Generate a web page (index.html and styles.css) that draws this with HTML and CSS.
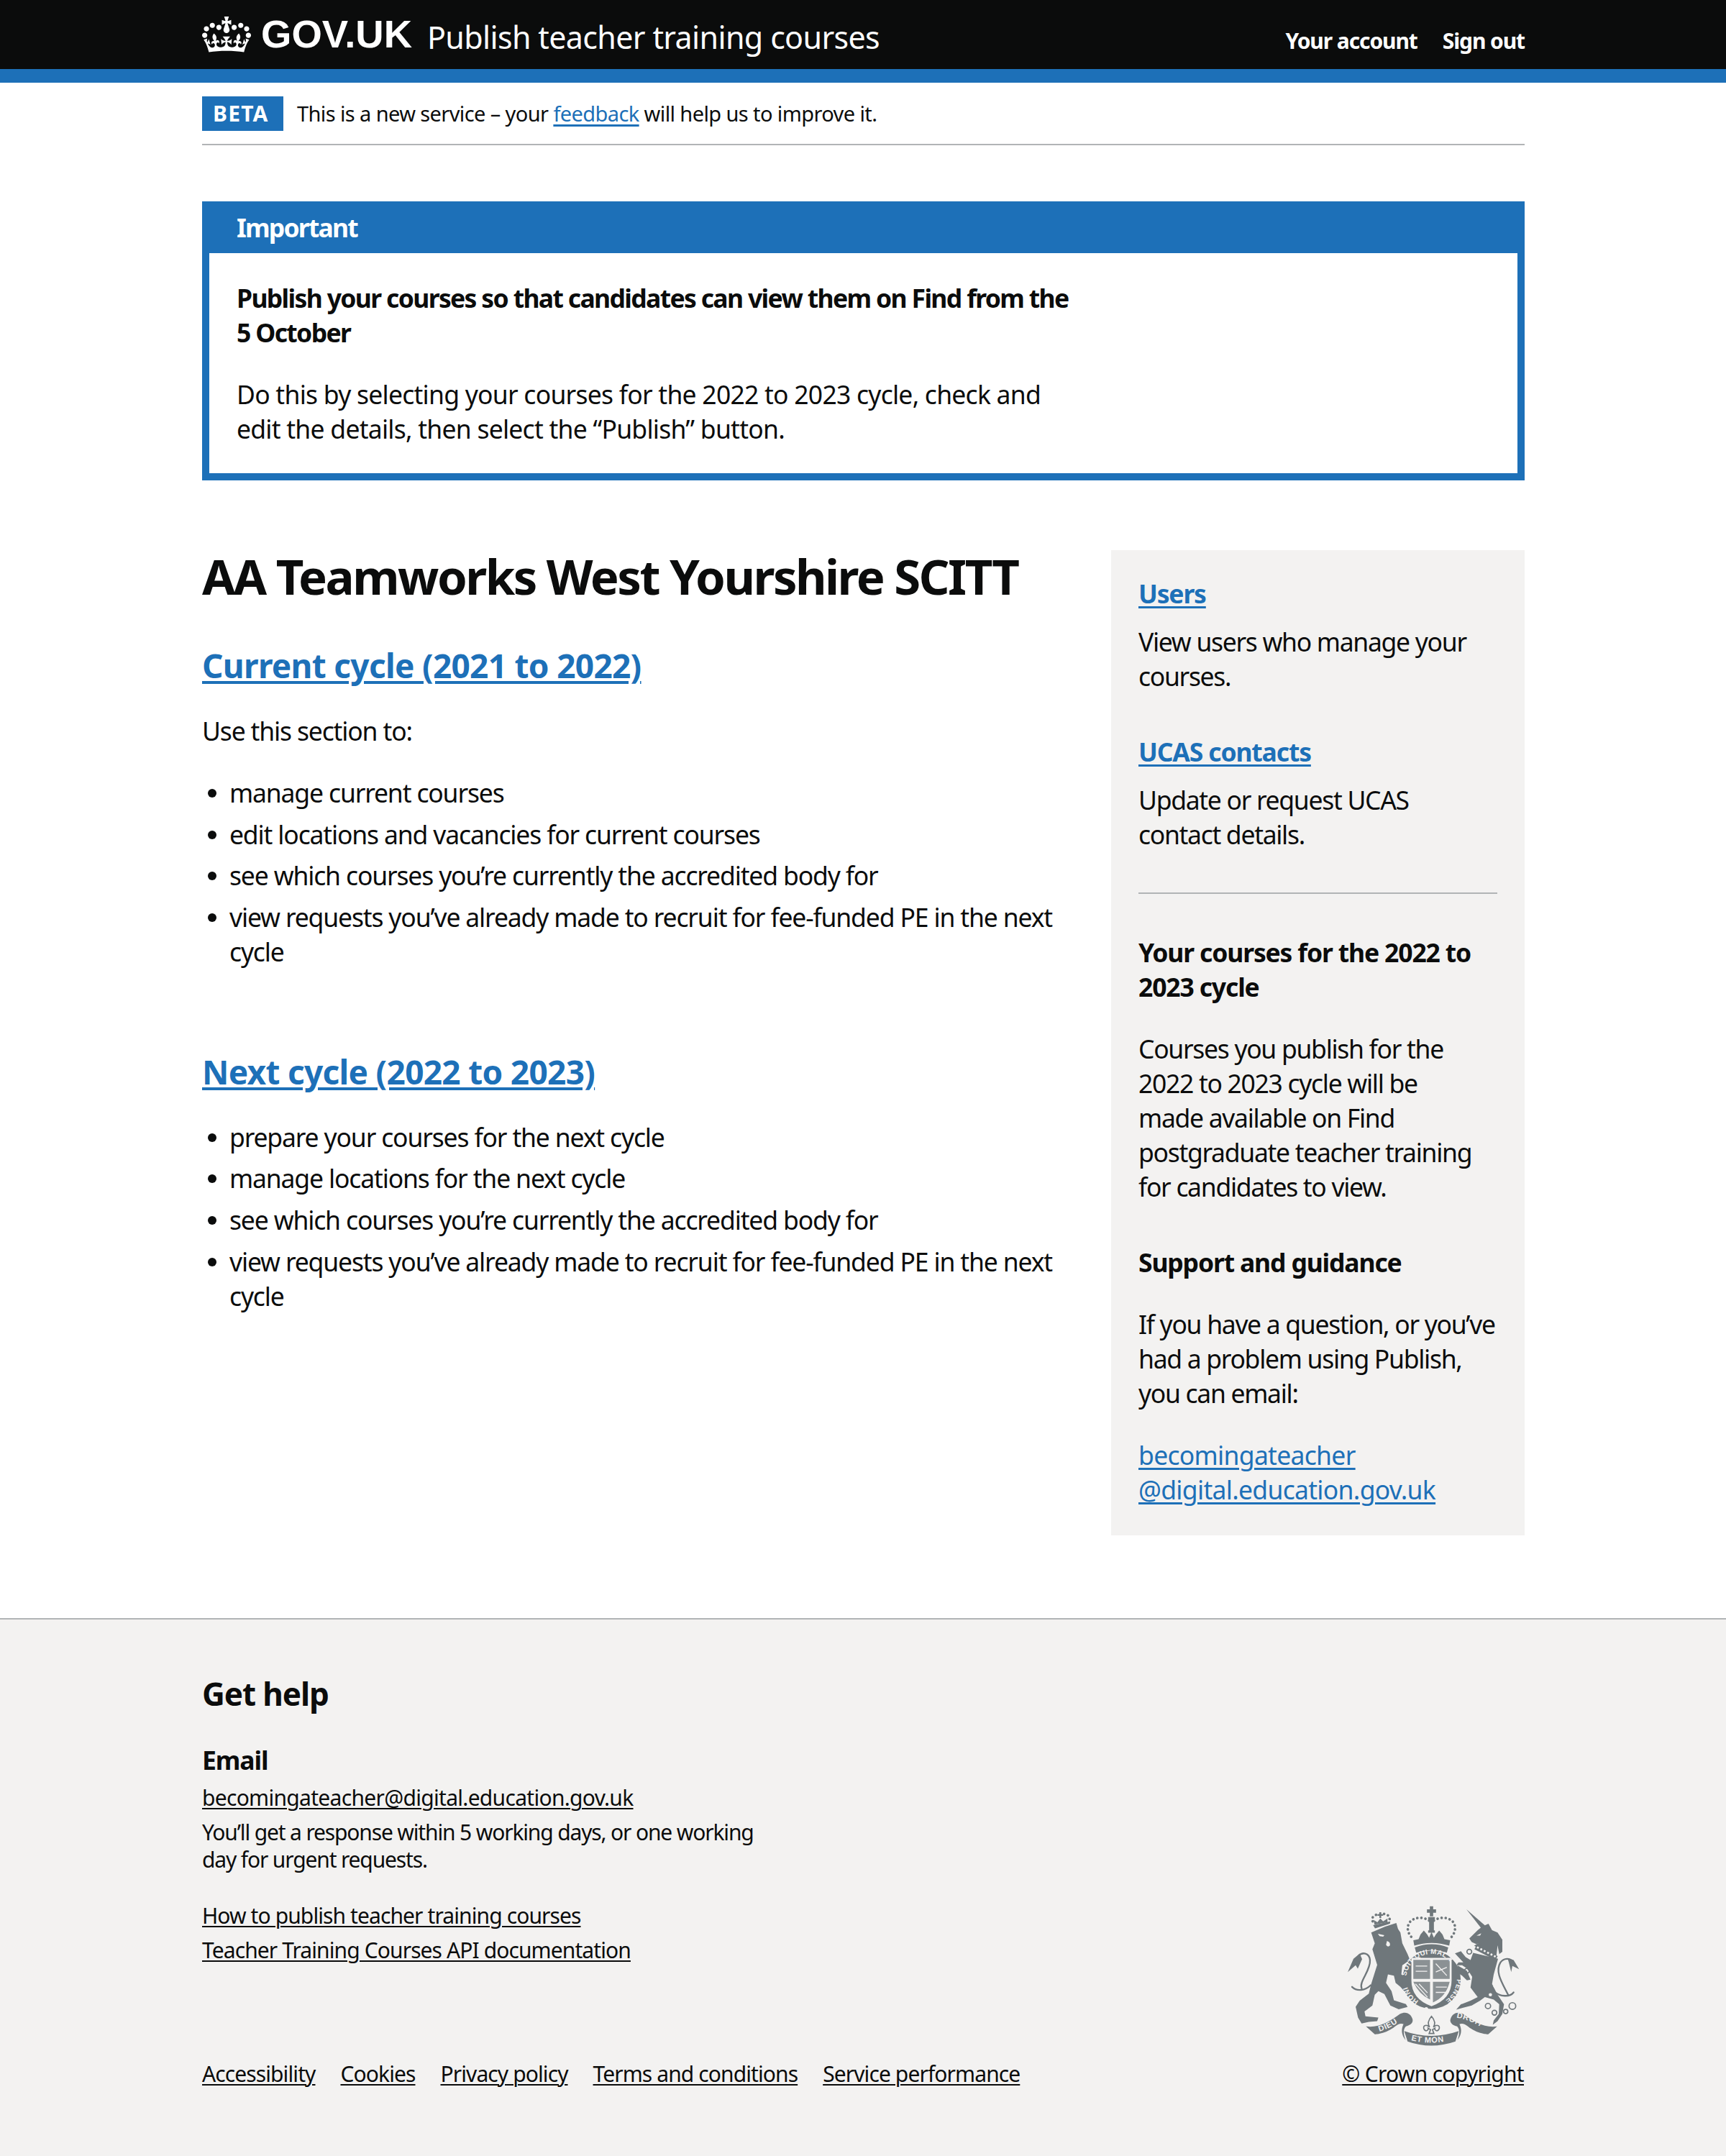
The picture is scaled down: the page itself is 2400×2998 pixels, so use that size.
FILE: index.html
```html
<!DOCTYPE html>
<html lang="en">
<head>
<meta charset="utf-8">
<title>Publish teacher training courses</title>
<link rel="stylesheet" href="styles.css">
</head>
<body>
<header class="site-header">
  <div class="wrap header-row">
    <a class="logo" href="#">
      <svg class="crown" viewBox="0 0 132 97" aria-hidden="true"><path fill="currentColor" fill-rule="evenodd" d="M25 30.2c3.5 1.5 7.7-.2 9.1-3.7 1.5-3.6-.2-7.8-3.9-9.2-3.6-1.4-7.6.3-9.1 3.9-1.4 3.5.3 7.5 3.9 9zM9 39.5c3.6 1.5 7.8-.2 9.2-3.7 1.5-3.6-.2-7.8-3.9-9.1-3.6-1.5-7.6.2-9.1 3.8-1.4 3.5.3 7.5 3.8 9zM4.4 57.2c3.5 1.5 7.7-.2 9.1-3.8 1.5-3.6-.2-7.7-3.9-9.1-3.5-1.5-7.6.3-9.1 3.8-1.4 3.5.3 7.6 3.9 9.1zm38.3-21.4c3.5 1.5 7.7-.2 9.1-3.8 1.5-3.6-.2-7.7-3.9-9.1-3.6-1.5-7.6.3-9.1 3.8-1.3 3.6.4 7.7 3.9 9.1zm64.4-5.6c-3.6 1.5-7.8-.2-9.1-3.7-1.5-3.6.2-7.8 3.8-9.2 3.6-1.4 7.7.3 9.2 3.9 1.3 3.5-.4 7.5-3.9 9zm15.9 9.3c-3.6 1.5-7.7-.2-9.1-3.7-1.5-3.6.2-7.8 3.7-9.1 3.6-1.5 7.7.2 9.2 3.8 1.5 3.5-.3 7.5-3.8 9zm4.7 17.7c-3.6 1.5-7.8-.2-9.2-3.8-1.5-3.6.2-7.7 3.9-9.1 3.6-1.5 7.7.3 9.2 3.8 1.3 3.5-.4 7.6-3.9 9.1zM89.3 35.8c-3.6 1.5-7.8-.2-9.2-3.8-1.4-3.6.2-7.7 3.9-9.1 3.6-1.5 7.7.3 9.2 3.8 1.4 3.6-.3 7.7-3.9 9.1zM69.7 17.7l8.9 4.7V9.3l-8.9 2.8c-.2-.3-.5-.6-.9-.9L72.4 0H59.6l3.5 11.2c-.3.3-.6.5-.9.9l-8.8-2.8v13.1l8.8-4.7c.3.3.6.7.9.9l-5 15.4v.1c-.2.8-.4 1.6-.4 2.4 0 4.1 3.1 7.5 7 8.1h.2c.3 0 .7.1 1 .1.4 0 .7 0 1-.1h.2c4-.6 7.1-4.1 7.1-8.1 0-.8-.1-1.7-.4-2.4V34l-5.1-15.4c.4-.2.7-.6 1-.9zM66 92.8c16.9 0 32.8 1.1 47.1 3.2 4-16.9 8.9-26.7 14-33.5l-9.6-3.4c1 4.9 1.1 7.2 0 10.2-1.5-1.4-3-4.3-4.2-8.7L108.6 76c2.8-2 5-3.2 7.5-3.3-4.4 9.4-10 11.9-13.6 11.2-4.3-.8-6.3-4.6-5.6-7.9 1-4.7 5.7-5.9 8-.5 4.3-8.7-3-11.4-7.6-8.8 7.1-7.2 7.9-13.5 2.1-21.1-8 6.1-8.1 12.3-4.5 20.8-4.7-5.4-12.1-2.5-9.5 6.2 3.4-5.2 7.9-2 7.2 3.1-.6 4.3-6.4 7.8-13.5 7.2-10.3-.9-10.9-8-11.2-13.8 2.5-.5 7.1 1.8 11 7.3L80.2 60c-4.1 4.4-8 5.3-12.3 5.4 1.4-4.4 8-11.6 8-11.6H55.5s6.4 7.2 7.9 11.6c-4.2-.1-8-1-12.3-5.4l1.4 16.4c3.9-5.5 8.5-7.7 10.9-7.3-.3 5.8-.9 12.8-11.1 13.8-7.2.6-12.9-2.9-13.5-7.2-.7-5 3.8-8.3 7.1-3.1 2.7-8.7-4.6-11.6-9.4-6.2 3.7-8.5 3.6-14.7-4.6-20.8-5.8 7.6-5 13.9 2.2 21.1-4.7-2.6-11.9.1-7.7 8.8 2.3-5.5 7.1-4.2 8.1.5.7 3.3-1.3 7.1-5.7 7.9-3.5.7-9-1.8-13.5-11.2 2.5.1 4.7 1.3 7.5 3.3l-4.7-15.4c-1.2 4.4-2.7 7.2-4.3 8.7-1.1-3-.9-5.3 0-10.2l-9.5 3.4c5 6.9 9.9 16.7 14 33.5 14.8-2.1 30.8-3.2 47.7-3.2z"/></svg>
      <span class="logo-text">GOV.UK</span>
    </a>
    <a class="service-name" href="#">Publish teacher training courses</a>
    <nav class="account-nav">
      <a href="#">Your account</a>
      <a href="#">Sign out</a>
    </nav>
  </div>
</header>
<div class="wrap">
  <div class="phase">
    <strong class="tag">BETA</strong>
    <span>This is a new service – your <a class="link" href="#">feedback</a> will help us to improve it.</span>
  </div>
  <section class="banner">
    <h2 class="banner-title">Important</h2>
    <div class="banner-body">
      <p class="banner-heading">Publish your courses so that candidates can view them on Find from the 5&nbsp;October</p>
      <p class="banner-text">Do this by selecting your courses for the 2022 to 2023 cycle, check and edit the details, then select the “Publish” button.</p>
    </div>
  </section>
  <main class="columns">
    <div class="main-col">
      <h1 class="page-title">AA Teamworks West Yourshire SCITT</h1>
      <h2 class="section-title"><a class="link" href="#">Current cycle (2021 to 2022)</a></h2>
      <p class="intro">Use this section to:</p>
      <ul class="bullets">
        <li>manage current courses</li>
        <li>edit locations and vacancies for current courses</li>
        <li>see which courses you’re currently the accredited body for</li>
        <li>view requests you’ve already made to recruit for fee-funded PE in the next cycle</li>
      </ul>
      <h2 class="section-title second"><a class="link" href="#">Next cycle (2022 to 2023)</a></h2>
      <ul class="bullets">
        <li>prepare your courses for the next cycle</li>
        <li>manage locations for the next cycle</li>
        <li>see which courses you’re currently the accredited body for</li>
        <li>view requests you’ve already made to recruit for fee-funded PE in the next cycle</li>
      </ul>
    </div>
    <aside class="sidebar">
      <h3 class="side-head"><a class="link" href="#">Users</a></h3>
      <p class="side-link-text">View users who manage your courses.</p>
      <h3 class="side-head"><a class="link" href="#">UCAS contacts</a></h3>
      <p class="side-link-text">Update or request UCAS<br>contact details.</p>
      <hr class="side-rule">
      <h3 class="side-head tight">Your courses for the 2022 to 2023 cycle</h3>
      <p class="side-para">Courses you publish for the 2022 to 2023 cycle will be<br>made available on Find postgraduate teacher training for candidates to view.</p>
      <h3 class="side-head tight">Support and guidance</h3>
      <p class="side-para">If you have a question, or you’ve had a problem using Publish, you can email:</p>
      <p class="side-email"><a class="link" href="#">becomingateacher<br>@digital.education.gov.uk</a></p>
    </aside>
  </main>
</div>
<footer class="site-footer">
  <div class="wrap footer-row">
    <div class="footer-left">
      <h2 class="footer-title">Get help</h2>
      <h3 class="footer-sub">Email</h3>
      <p class="footer-line footer-email"><a class="foot-link" href="#">becomingateacher@digital.education.gov.uk</a></p>
      <p class="footer-note">You’ll get a response within 5 working days, or one working day for urgent requests.</p>
      <p class="footer-line"><a class="foot-link" href="#">How to publish teacher training courses</a></p>
      <p class="footer-line"><a class="foot-link" href="#">Teacher Training Courses API documentation</a></p>
      <ul class="footer-meta">
        <li><a class="foot-link" href="#">Accessibility</a></li>
        <li><a class="foot-link" href="#">Cookies</a></li>
        <li><a class="foot-link" href="#">Privacy policy</a></li>
        <li><a class="foot-link" href="#">Terms and conditions</a></li>
        <li><a class="foot-link" href="#">Service performance</a></li>
      </ul>
    </div>
    <div class="crown-copy">
      <svg class="arms" viewBox="100 85 725 595" aria-hidden="true">
        <defs>
          <path id="g-top" d="M346 395A106 106 0 0 1 558 395"/>
          <path id="g-right" d="M558 392A106 106 0 0 1 504 487"/>
          <path id="g-left" d="M398 486A106 106 0 0 1 346 400"/>
          <path id="r-left" d="M232 614Q285 600 332 560"/>
          <path id="r-mid" d="M366 650Q452 672 538 648"/>
          <path id="r-right" d="M556 556Q620 565 682 610"/>
        </defs>
        <!-- supporters: lion -->
        <g class="af" transform="translate(90 75)">
          <path d="M110 125L168 100 215 85 222 110 232 125 240 170 262 215 272 240 240 262 236 300 262 318 270 342 248 370 232 352 212 335 205 305 180 300 172 335 195 370 205 408 255 424 262 436 225 446 190 430 165 382 140 370 125 385 115 430 82 455 86 475 140 480 135 495 100 498 70 505 55 480 45 435 62 410 100 380 110 340 135 260 115 195 125 170Z"/>
          <path d="M62 213L36 235 12 290 45 262 54 276 72 236Z"/>
          <path d="M118 94L190 78 188 88 126 108Z"/>
          <path d="M144 40h8v8h8v7h-8v9h-8v-9h-8v-7h8z"/>
          <path d="M124 92L120 72 136 82 148 66 160 78 178 66 178 82Z"/>
        </g>
        <g transform="translate(90 75)">
          <path class="as" d="M108 345C85 368 50 372 30 352M70 358C58 330 108 285 105 240 102 208 72 206 58 222"/>
          <path class="ad" d="M116 78C108 60 128 46 148 50 168 42 192 52 186 76"/>
          <path class="ab" d="M138 130L165 136 160 142 145 140ZM176 160Q192 165 188 180 178 188 172 176Z"/>
        </g>
        <!-- supporters: unicorn -->
        <g class="af" transform="translate(450 75)">
          <path d="M148 28L225 95 240 88 255 115 278 125 298 155 298 205 285 215 278 178 272 235 180 180 236 150 215 162 190 174 170 165 160 150 195 115 208 105Z"/>
          <path d="M176 210L280 235 262 300 255 340 278 385 305 425 298 465 278 495 258 510 262 492 283 465 285 425 262 405 225 395 205 410 170 430 132 440 105 447 125 425 165 410 195 395 165 355 172 310 150 275 130 262 105 262 115 250 135 250 100 212 125 203 145 228 165 240Z"/>
          <path d="M110 262L150 285 165 322 150 325 130 305 108 290Z"/>
          <path d="M320 232L345 240 368 278 340 265 335 290 325 250Z"/>
        </g>
        <g transform="translate(450 75)">
          <path class="as" d="M262 370C290 395 330 395 345 375M322 385C300 340 265 290 290 250 305 230 330 232 340 245"/>
          <path class="abs" d="M186 186L274 232"/>
          <path class="ad2" d="M192 186L270 226"/>
          <circle class="ab" cx="268" cy="350" r="7"/><circle class="ab" cx="248" cy="385" r="7"/>
          <path class="ab" d="M190 138L210 128 205 138Z"/>
          <circle class="ar" cx="160" cy="205" r="10"/><circle class="ar" cx="150" cy="285" r="10"/>
          <circle class="ar" cx="238" cy="432" r="11"/><circle class="ar" cx="265" cy="460" r="10"/><circle class="ar" cx="312" cy="455" r="9"/><circle class="ar" cx="340" cy="432" r="14"/>
        </g>
        <!-- main crown -->
        <g class="af">
          <path d="M445 90h14v13h12v14h-12v15h-14v-15h-12v-14h12z"/>
          <path d="M438 135h28v10h-4v46h4v10h-28v-10h4v-46h-4z"/>
          <path d="M376 232L398 228 406 208 420 192 434 208 442 222 452 198 462 222 470 208 484 192 498 208 506 228 530 232 526 255Q452 232 380 255Z"/>
          <path d="M382 262Q452 236 522 262L516 284Q452 262 388 284Z"/>
        </g>
        <path class="ad" d="M442 150C415 132 378 135 360 158 345 182 355 210 378 228M462 150C490 132 526 135 544 158 558 182 548 210 526 228"/>
        <!-- garter -->
        <circle class="af" cx="452" cy="397" r="122"/>
        <path class="ab" d="M368 306H536V400Q536 478 452 508 368 478 368 400Z"/>
        <path class="al" d="M376 314H446V394H376ZM458 314H528V394H458ZM376 406H446V480Q400 460 376 406ZM458 406H528Q512 470 458 492Z"/>
        <path class="ast" d="M386 340H434M386 362H434M470 330L516 380M470 365L516 345M470 428H516M470 450H516M385 415L435 470M400 415L435 452"/>
        <circle class="ab" cx="430" cy="520" r="8"/><circle class="ab" cx="462" cy="530" r="7"/>
        <text class="t-garter"><textPath href="#g-top" startOffset="4%">SOIT QUI MAL Y</textPath></text>
        <text class="t-garter"><textPath href="#g-right" startOffset="2%">PENSE</textPath></text>
        <text class="t-garter"><textPath href="#g-left">HONI</textPath></text>
        <!-- motto ribbon -->
        <g class="af">
          <path d="M178 592C230 600 280 570 320 540 350 525 368 545 372 560 378 575 365 588 345 592 332 605 335 625 344 650 325 625 325 605 335 582 322 578 312 582 300 592 260 625 215 625 215 625Z"/>
          <path transform="translate(904 0) scale(-1 1)" d="M178 592C230 600 280 570 320 540 350 525 368 545 372 560 378 575 365 588 345 592 332 605 335 625 344 650 325 625 325 605 335 582 322 578 312 582 300 592 260 625 215 625 215 625Z"/>
          <path d="M338 612Q450 652 566 612L552 655Q450 690 352 655Z"/>
        </g>
        <path class="afl" d="M452 550C466 566 470 580 460 596 474 580 492 590 482 606 474 616 464 606 466 600L456 606 462 622H442L448 606 438 600C440 606 430 616 422 606 412 590 430 580 444 596 434 580 438 566 452 550Z"/>
        <text class="t-ribbon"><textPath href="#r-left" startOffset="2%">DIEU</textPath></text>
        <text class="t-ribbon"><textPath href="#r-mid">ET MON</textPath></text>
        <text class="t-ribbon"><textPath href="#r-right">DROIT</textPath></text>
      </svg>
      <a class="foot-link crown-link" href="#">© Crown copyright</a>
    </div>
  </div>
</footer>
</body>
</html>
```
FILE: styles.css
```css
* { box-sizing: border-box; }
html, body { margin: 0; padding: 0; }
body {
  font-family: "Noto Sans", "Liberation Sans", sans-serif;
  font-size: 35.5px;
  line-height: 48px;
  letter-spacing: -1.15px;
  color: #0b0c0c;
  background: #fff;
}
.wrap { width: 1839px; margin: 0 280px 0 281px; }
p, h1, h2, h3, ul { margin: 0; padding: 0; }
a { color: inherit; }
.link { color: #1d70b8; text-decoration-thickness: 3px; text-underline-offset: 4px; }

.site-header { background: #0b0c0c; border-bottom: 19px solid #1d70b8; height: 115px; color: #fff; }
.header-row { display: flex; align-items: center; height: 96px; }
.logo { display: flex; align-items: center; color: #fff; text-decoration: none; }
.crown { width: 68px; height: 50px; margin-right: 14px; display: block; }
.logo-text { font-family: "Liberation Sans", sans-serif; font-weight: 700; font-size: 54.5px; letter-spacing: 0; line-height: 60px; }
.service-name { margin-left: 21px; font-size: 43px; color: #fff; text-decoration: none; letter-spacing: -.65px; line-height: 56px; padding-top: 8px; }
.account-nav { margin-left: auto; display: flex; gap: 35px; font-size: 30px; font-weight: 700; letter-spacing: -1.1px; padding-top: 18px; }
.account-nav a { color: #fff; text-decoration: none; }

.phase { display: flex; align-items: center; gap: 19px; height: 87px; padding-top: 1px; border-bottom: 2px solid #b1b4b6; font-size: 29px; letter-spacing: -.6px; }
.tag { background: #1d70b8; color: #fff; font-size: 30px; font-weight: 700; letter-spacing: 1.2px; line-height: 48px; padding: 0 18px 0 15px; width: 113px; }

.banner { margin-top: 78px; border: 10px solid #1d70b8; background: #fff; }
.banner-title { background: #1d70b8; color: #fff; font-size: 35.5px; font-weight: 700; line-height: 48px; padding: 2px 38px 12px; height: 62px; letter-spacing: -1.8px; }
.banner-body { padding: 38px 38px 38px; width: 1245px; }
.banner-heading { font-weight: 700; margin-bottom: 38px; letter-spacing: -1.65px; }
.banner-text { letter-spacing: -.75px; }

.columns { display: flex; justify-content: space-between; align-items: flex-start; margin-top: 97px; margin-bottom: 115px; }
.main-col { width: 1215px; }
.page-title { font-size: 67px; line-height: 72px; font-weight: 700; letter-spacing: -2.5px; margin-bottom: 62px; }
.section-title { font-size: 46px; line-height: 52px; font-weight: 700; letter-spacing: -.7px; margin-bottom: 41px; }
.section-title .link { text-decoration-thickness: 4px; }
.section-title.second { margin-top: 117px; }
.intro { margin-bottom: 38px; }
.bullets { list-style: none; }
.bullets li { position: relative; padding-left: 38px; margin-bottom: 9.6px; }
.bullets li::before { content: ""; position: absolute; left: 8px; top: 19px; width: 12px; height: 12px; border-radius: 50%; background: #0b0c0c; }

.sidebar { width: 575px; background: #f3f2f1; padding: 36px 38px 40px; letter-spacing: -1.3px; }
.side-head { font-size: 35.5px; line-height: 48px; font-weight: 700; letter-spacing: -1.15px; margin-bottom: 19px; }
.side-head.tight { margin-bottom: 38px; }
.side-link-text { margin-bottom: 57px; }
.side-rule { border: 0; border-top: 2px solid #b1b4b6; margin: 0 0 57px; }
.side-para { margin-bottom: 57px; }
.side-para:nth-last-child(2) { margin-bottom: 38px; }
.side-email { letter-spacing: -.7px; }

.site-footer { background: #f3f2f1; border-top: 2px solid #b1b4b6; height: 750px; padding-top: 74px; font-size: 30px; line-height: 38px; letter-spacing: -.9px; }
.footer-row { display: flex; justify-content: space-between; align-items: flex-end; }
.foot-link { color: #0b0c0c; text-decoration-thickness: 2px; text-underline-offset: 3px; }
.footer-title { font-size: 44px; line-height: 58px; font-weight: 700; letter-spacing: -1.1px; margin-bottom: 39px; }
.footer-sub { font-size: 35.5px; line-height: 48px; font-weight: 700; margin-bottom: 10px; letter-spacing: -1.1px; }
.footer-line { margin-bottom: 10px; }
.footer-email { letter-spacing: -.7px; }
.footer-note { width: 800px; margin-bottom: 40px; letter-spacing: -1.15px; }
.footer-meta { display: flex; gap: 35px; list-style: none; margin-top: 134px; }
.crown-copy { display: flex; flex-direction: column; align-items: flex-end; }
.crown-link { letter-spacing: -.7px; margin-right: 1px; }
.arms { width: 242px; height: 198px; margin-bottom: 18px; display: block; margin-right: 5px; }
.af path, .af circle, .af { fill: #6f777b; }
.as { fill: none; stroke: #6f777b; stroke-width: 7; stroke-linecap: round; }
.ad { fill: none; stroke: #6f777b; stroke-width: 11; stroke-linecap: round; stroke-dasharray: .1 17; }
.ad2 { fill: none; stroke: #f3f2f1; stroke-width: 8; stroke-dasharray: 8 8; }
.abs { fill: none; stroke: #6f777b; stroke-width: 20; }
.ab { fill: #f3f2f1; }
.ar { fill: none; stroke: #6f777b; stroke-width: 5; }
.al { fill: #8b9194; }
.ast { fill: none; stroke: #f3f2f1; stroke-width: 4; }
.afl { fill: #f3f2f1; stroke: #6f777b; stroke-width: 5; }
.t-garter { font-family: "Liberation Sans", sans-serif; font-size: 29px; font-weight: 700; fill: #f3f2f1; letter-spacing: 1.5px; }
.t-ribbon { font-family: "Liberation Sans", sans-serif; font-size: 33px; font-weight: 700; fill: #f3f2f1; letter-spacing: 2px; }
```
